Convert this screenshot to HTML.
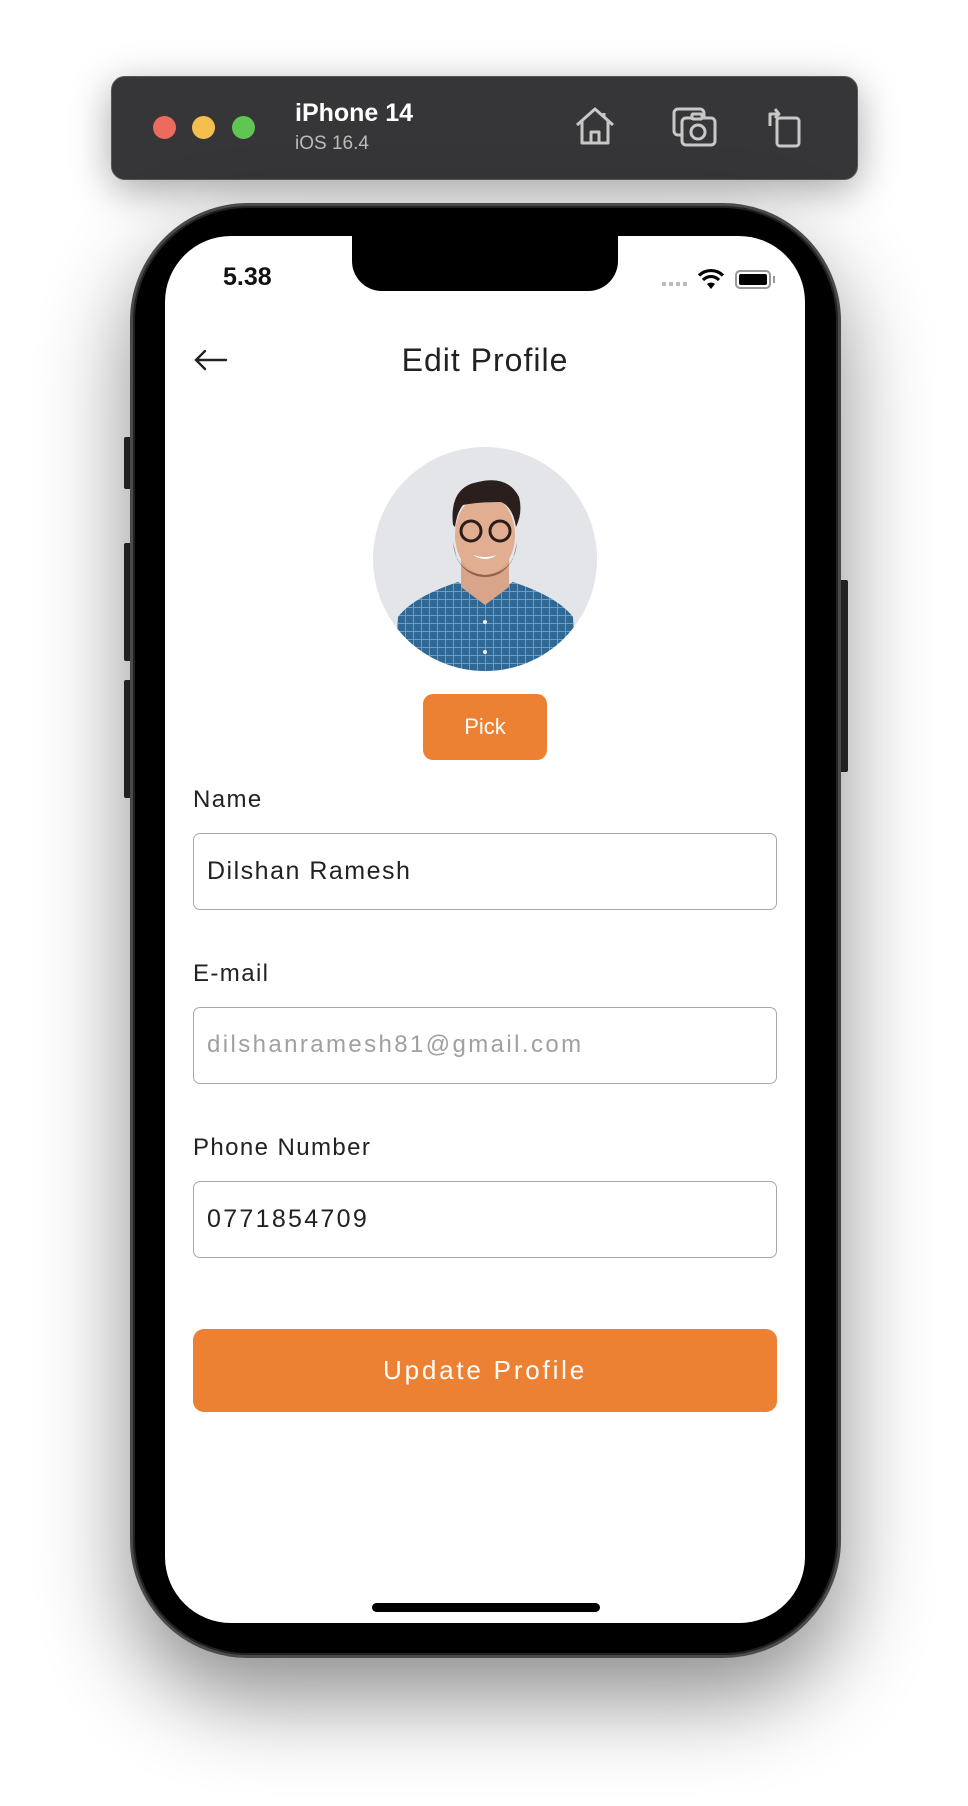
<!DOCTYPE html>
<html><head><meta charset="utf-8"><style>
*{margin:0;padding:0;box-sizing:border-box}
body{width:968px;height:1806px;background:#fff;position:relative;overflow:hidden;font-family:"Liberation Sans",sans-serif}
.abs{position:absolute}
.toolbar{left:111px;top:76px;width:747px;height:104px;background:#363638;border-radius:14px;border:1px solid #555;box-shadow:0 10px 40px rgba(0,0,0,.35)}
.dot{width:23px;height:23px;border-radius:50%;top:116px}
.phone{left:130px;top:203px;width:711px;height:1455px;background:#000;border-radius:118px;border:3px solid #4a4a4a;box-shadow:0 40px 90px rgba(0,0,0,.45),inset 0 0 0 2px #222}
.screen{left:165px;top:236px;width:640px;height:1387px;background:#fff;border-radius:66px;overflow:hidden}
.btn{background:#ed8133;color:#fff;text-align:center}
.lbl{font-size:24px;color:#222;left:193px;letter-spacing:1.4px}
.inp{left:193px;width:584px;height:77px;border:1.5px solid #a8a8a8;border-radius:7px;font-size:25px;letter-spacing:1.5px;padding-left:13px;line-height:74px;color:#222}
.side{background:#2a2a2a;border-radius:2px}
</style></head><body>
<div class="abs toolbar"></div>
<div class="abs dot" style="left:153px;background:#ec6a5e"></div>
<div class="abs dot" style="left:192px;background:#f4bf4f"></div>
<div class="abs dot" style="left:232px;background:#61c554"></div>
<div class="abs" style="left:295px;top:99px;color:#fff;font-weight:bold;font-size:25px">iPhone 14</div>
<div class="abs" style="left:295px;top:133px;color:#bbb;font-size:19px">iOS 16.4</div>
<svg class="abs" style="left:573px;top:105px" width="44" height="42" viewBox="0 0 44 42" fill="none" stroke="#c8c8c8" stroke-width="3" stroke-linejoin="round"><path d="M4 20 L22 4 L40 20 M9 16 V38 H35 V16 M18 38 V27 H26 V38"/><path d="M31 8 V13" /></svg>
<svg class="abs" style="left:672px;top:106px" width="46" height="42" viewBox="0 0 46 42" fill="none" stroke="#c8c8c8" stroke-width="3"><rect x="2" y="3" width="30" height="26" rx="4"/><rect x="10" y="12" width="33" height="27" rx="4" fill="#363638"/><circle cx="26" cy="26" r="7"/><rect x="20" y="8" width="10" height="5" rx="1" fill="#363638"/></svg>
<svg class="abs" style="left:766px;top:104px" width="36" height="44" viewBox="0 0 36 44" fill="none" stroke="#c8c8c8" stroke-width="3"><rect x="11" y="14" width="22" height="28" rx="3"/><path d="M4 22 V10 H12 M9 5 L13 10 L9 14" stroke-linejoin="round"/></svg>

<div class="abs side" style="left:124px;top:437px;width:8px;height:52px"></div>
<div class="abs side" style="left:124px;top:543px;width:8px;height:118px"></div>
<div class="abs side" style="left:124px;top:680px;width:8px;height:118px"></div>
<div class="abs side" style="left:839px;top:580px;width:9px;height:192px"></div>
<div class="abs phone"></div>
<div class="abs screen">
  <div class="abs" style="left:187px;top:0;width:266px;height:55px;background:#000;border-radius:0 0 30px 30px"></div>
  <div class="abs" style="left:58px;top:27px;font-size:25px;font-weight:bold;color:#111">5.38</div>
  <div class="abs" style="left:497px;top:46px;width:26px;height:4px;background:repeating-linear-gradient(90deg,#bbb 0 4px,transparent 4px 7px)"></div>
  <svg class="abs" style="left:532px;top:32px" width="28" height="22" viewBox="0 0 28 22"><path d="M14 21 L10 16 A6 6 0 0 1 18 16 Z" fill="#000"/><path d="M6 12 A11 11 0 0 1 22 12" stroke="#000" stroke-width="3.2" fill="none"/><path d="M2 7.5 A17 17 0 0 1 26 7.5" stroke="#000" stroke-width="3.2" fill="none"/></svg>
  <div class="abs" style="left:570px;top:34px;width:36px;height:19px;border:2px solid #999;border-radius:5px;padding:2px"><div style="width:100%;height:100%;background:#000;border-radius:2px"></div></div>
  <div class="abs" style="left:608px;top:40px;width:2px;height:7px;background:#999"></div>
  <svg class="abs" style="left:28px;top:112px" width="36" height="24" viewBox="0 0 36 24" fill="none" stroke="#222" stroke-width="2.4" stroke-linecap="round"><path d="M3 12 H33 M12 3 L3 12 L12 21"/></svg>
  <div class="abs" style="left:0;width:640px;top:106px;text-align:center;font-size:32px;letter-spacing:1px;color:#222">Edit Profile</div>
  <svg class="abs" style="left:208px;top:211px" width="224" height="224" viewBox="0 0 224 224">
    <defs><clipPath id="c"><circle cx="112" cy="112" r="112"/></clipPath>
    <pattern id="p" width="8" height="8" patternUnits="userSpaceOnUse"><rect width="8" height="8" fill="#2f6795"/><path d="M0 .5H8M.5 0V8" stroke="#6a9ec6" stroke-width="1"/></pattern></defs>
    <g clip-path="url(#c)">
      <rect width="224" height="224" fill="#e3e5e9"/>
      <path d="M20 224 L25 170 Q40 150 85 135 L112 150 L140 135 Q185 150 200 170 L205 224Z" fill="url(#p)"/>
      <path d="M88 112 L88 140 L112 158 L136 140 L136 112Z" fill="#d9a58a"/>
      <ellipse cx="112" cy="88" rx="30" ry="40" fill="#e1ae92"/>
      <path d="M80 95 Q82 125 112 128 Q142 125 144 95 L140 112 Q130 130 112 130 Q94 130 84 112Z" fill="#5a3a2a" opacity=".6"/>
      <path d="M80 78 Q76 40 105 35 Q135 28 146 50 Q150 65 143 80 Q140 60 128 55 Q105 55 90 58 Q84 65 82 80Z" fill="#2a1f1c"/>
      <circle cx="98" cy="84" r="10" fill="none" stroke="#2b1e18" stroke-width="3"/>
      <circle cx="127" cy="84" r="10" fill="none" stroke="#2b1e18" stroke-width="3"/>
      <path d="M100 108 Q112 116 124 108 Q112 112 100 108Z" fill="#fff"/>
      <circle cx="112" cy="175" r="2" fill="#eee"/><circle cx="112" cy="205" r="2" fill="#eee"/>
    </g>
  </svg>
  <div class="abs btn" style="left:258px;top:458px;width:124px;height:66px;border-radius:10px;line-height:66px;font-size:22px">Pick</div>
</div>
<div class="abs lbl" style="top:786px">Name</div>
<div class="abs inp" style="top:833px">Dilshan Ramesh</div>
<div class="abs lbl" style="top:960px">E-mail</div>
<div class="abs inp" style="top:1007px;color:#a0a0a0;font-size:24px;letter-spacing:2.4px">dilshanramesh81@gmail.com</div>
<div class="abs lbl" style="top:1134px">Phone Number</div>
<div class="abs inp" style="top:1181px;letter-spacing:2.3px">0771854709</div>
<div class="abs btn" style="left:193px;top:1329px;width:584px;height:83px;border-radius:11px;line-height:83px;font-size:26px;letter-spacing:2.8px">Update Profile</div>
<div class="abs" style="left:372px;top:1603px;width:228px;height:9px;background:#000;border-radius:5px"></div>
</body></html>
